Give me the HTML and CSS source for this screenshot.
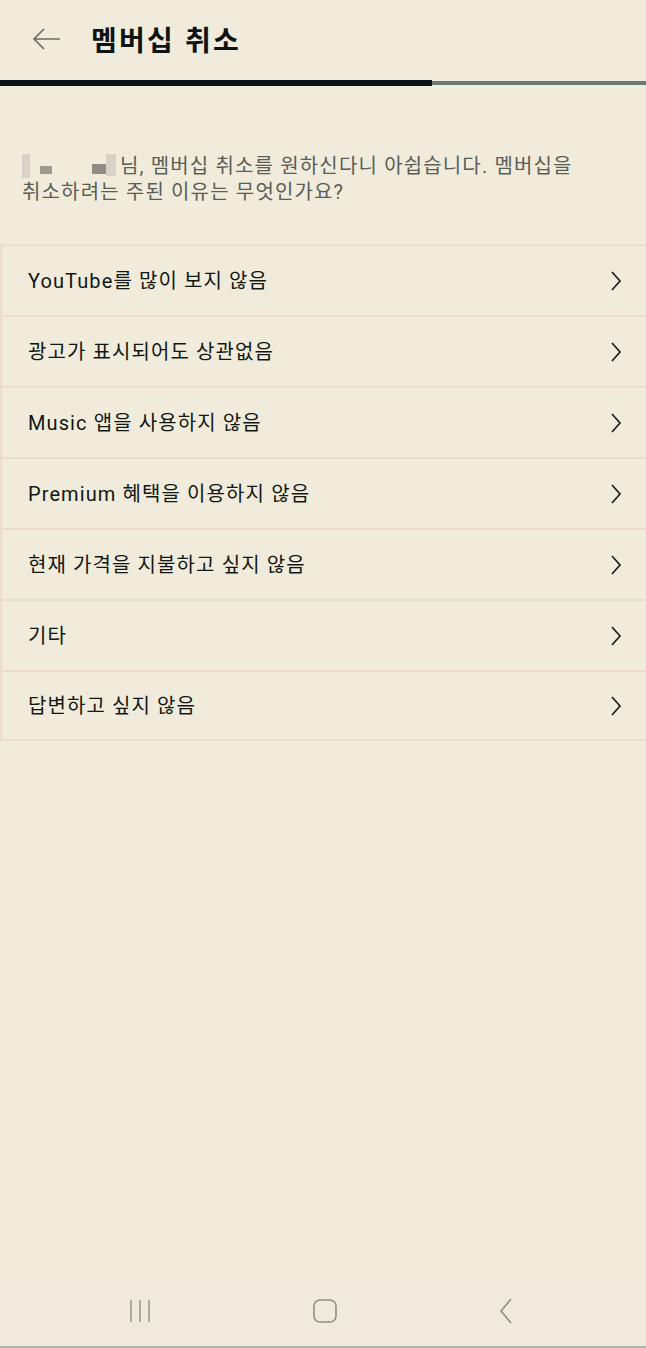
FILE: index.html
```html
<!DOCTYPE html>
<html lang="ko">
<head>
<meta charset="utf-8">
<link rel="stylesheet" href="styles.css">
</head>
<body>
<div class="screen">
  <header class="top">
    <svg class="back" width="30" height="24" viewBox="0 0 30 24"><path d="M13 2 L3 12 L13 22 M3 12 H29" fill="none" stroke="#6b6b66" stroke-width="1.6"/></svg>
    <h1 class="title">멤버십 취소</h1>
  </header>
  <div class="progress"><div class="done"></div><div class="rest"></div></div>
  <p class="intro"><span class="blur"><i class="b1"></i><i class="b2"></i><i class="b3"></i><i class="b4"></i></span>님, 멤버십 취소를 원하신다니 아쉽습니다. 멤버십을 취소하려는 주된 이유는 무엇인가요?</p>
  <ul class="list">
    <li class="item"><span>YouTube를 많이 보지 않음</span><svg class="chev" width="12" height="20" viewBox="0 0 12 20"><path d="M2 1 L10 10 L2 19" fill="none" stroke="#1a1e1c" stroke-width="1.7"/></svg></li>
    <li class="item"><span>광고가 표시되어도 상관없음</span><svg class="chev" width="12" height="20" viewBox="0 0 12 20"><path d="M2 1 L10 10 L2 19" fill="none" stroke="#1a1e1c" stroke-width="1.7"/></svg></li>
    <li class="item"><span>Music 앱을 사용하지 않음</span><svg class="chev" width="12" height="20" viewBox="0 0 12 20"><path d="M2 1 L10 10 L2 19" fill="none" stroke="#1a1e1c" stroke-width="1.7"/></svg></li>
    <li class="item"><span>Premium 혜택을 이용하지 않음</span><svg class="chev" width="12" height="20" viewBox="0 0 12 20"><path d="M2 1 L10 10 L2 19" fill="none" stroke="#1a1e1c" stroke-width="1.7"/></svg></li>
    <li class="item"><span>현재 가격을 지불하고 싶지 않음</span><svg class="chev" width="12" height="20" viewBox="0 0 12 20"><path d="M2 1 L10 10 L2 19" fill="none" stroke="#1a1e1c" stroke-width="1.7"/></svg></li>
    <li class="item"><span>기타</span><svg class="chev" width="12" height="20" viewBox="0 0 12 20"><path d="M2 1 L10 10 L2 19" fill="none" stroke="#1a1e1c" stroke-width="1.7"/></svg></li>
    <li class="item"><span>답변하고 싶지 않음</span><svg class="chev" width="12" height="20" viewBox="0 0 12 20"><path d="M2 1 L10 10 L2 19" fill="none" stroke="#1a1e1c" stroke-width="1.7"/></svg></li>
  </ul>
  <div class="spacer"></div>
  <nav class="navbar">
    <svg width="24" height="24" viewBox="0 0 24 24"><path d="M3 1 V23 M12 1 V23 M21 1 V23" stroke="#8e8e8a" stroke-width="1.4" fill="none"/></svg>
    <svg width="26" height="26" viewBox="0 0 26 26"><rect x="2" y="2" width="22" height="22" rx="6" fill="none" stroke="#8e8e8a" stroke-width="1.6"/></svg>
    <svg width="16" height="26" viewBox="0 0 16 26"><path d="M13 1 L3 13 L13 25" fill="none" stroke="#8e8e8a" stroke-width="1.6"/></svg>
  </nav>
</div>
</body>
</html>
```
FILE: styles.css
```css
* { box-sizing: border-box; }
html, body { margin: 0; padding: 0; }
body {
  background: #f0ebda;
  font-family: Roboto, "Noto Sans CJK KR", sans-serif;
  color: #141a18;
}
.screen {
  width: 646px;
  height: 1348px;
  display: flex;
  flex-direction: column;
  border-bottom: 2px solid #b4b2aa;
}
.top {
  height: 80px;
  display: flex;
  align-items: center;
  padding-left: 31px;
  padding-bottom: 2px;
}
.back { display: block; margin-right: 30px; }
.title {
  margin: 0;
  font-family: "Noto Sans CJK KR", sans-serif;
  font-size: 28px;
  font-weight: 700;
  color: #0d1315;
  letter-spacing: 2.2px;
}
.progress {
  display: flex;
  align-items: center;
  height: 6px;
}
.done { width: 432px; height: 6px; background: #0b1116; }
.rest { flex: 1; height: 4px; background: #6b7a72; }
.intro {
  margin: 67px 20px 0 22px;
  font-size: 20px;
  line-height: 26px;
  color: #5a5d58;
  letter-spacing: 1.15px;
  word-break: keep-all;
  height: 91px;
}
.blur {
  display: inline-block;
  position: relative;
  width: 98px;
  height: 24px;
  vertical-align: -5px;
}
.blur i { position: absolute; display: block; }
.b1 { left: 0; top: 0; width: 8px; height: 24px; background: #d9d2c9; }
.b2 { left: 18px; top: 12px; width: 12px; height: 8px; background: #9d9a92; }
.b3 { left: 70px; top: 10px; width: 18px; height: 10px; background: #8f8c86; }
.b4 { left: 84px; top: 0; width: 10px; height: 22px; background: #d8d2c8; }
.list {
  list-style: none;
  margin: 0;
  padding: 0;
  border-left: 2px solid #ecdccf;
}
.item {
  height: 71px;
  display: flex;
  align-items: center;
  justify-content: space-between;
  padding: 0 24px 0 26px;
  border-top: 2px solid #ecdccf;
  font-size: 20px;
  letter-spacing: 1.1px;
  color: #111715;
}
.item span { padding-bottom: 2px; }
.item:last-child { border-bottom: 2px solid #ecdccf; }
.chev { display: block; }
.spacer { flex: 1; }
.navbar {
  height: 74px;
  display: flex;
  align-items: center;
  justify-content: space-between;
  padding: 4px 132px 0 128px;
  background: #efeadb;
}
.navbar svg { display: block; }
```
